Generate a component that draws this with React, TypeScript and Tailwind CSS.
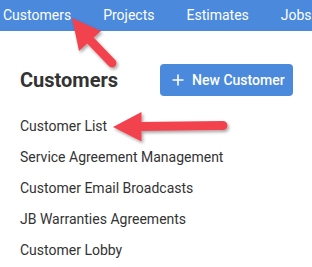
import React from "react";

const items = [
  "Customer List",
  "Service Agreement Management",
  "Customer Email Broadcasts",
  "JB Warranties Agreements",
  "Customer Lobby",
];

export default function App() {
  return (
    <div
      className="relative w-[312px] h-[267px] overflow-hidden bg-white"
      style={{ fontFamily: "Roboto, 'Liberation Sans', sans-serif" }}
    >
      <nav className="h-[31px] bg-[#4a89dc] flex items-center gap-8 pl-[3px] text-[14px] text-white whitespace-nowrap">
        <span>Customers</span>
        <span>Projects</span>
        <span>Estimates</span>
        <span>Jobs</span>
      </nav>
      <div className="pl-[20px]">
        <div className="mt-[33px] flex items-center">
          <h1 className="text-[20px] leading-[24px] font-bold text-[#333]">Customers</h1>
          <button className="ml-[42px] w-[133px] h-[32px] rounded-[4px] bg-[#4a89dc] text-white flex items-center pl-[12px] text-[14px] font-medium whitespace-nowrap">
            <svg width="12" height="12" viewBox="0 0 12 12" className="mr-[8px]">
              <path d="M6 0.5V11.5M0.5 6H11.5" stroke="white" strokeWidth="1.6" />
            </svg>
            New Customer
          </button>
        </div>
        <ul className="mt-[15px] text-[14px] leading-[31px] text-[#333]">
          {items.map((t) => (
            <li key={t}>{t}</li>
          ))}
        </ul>
      </div>
      <svg
        className="absolute left-0 top-0 pointer-events-none"
        width="312"
        height="267"
        viewBox="0 0 312 267"
      >
        <defs>
          <filter id="sh" x="-20%" y="-20%" width="140%" height="140%">
            <feDropShadow dx="1.5" dy="2" stdDeviation="1.5" floodColor="#000" floodOpacity="0.35" />
          </filter>
        </defs>
        <g filter="url(#sh)" fill="#f2424d" stroke="#f2424d">
          <line x1="88" y1="38" x2="112" y2="63" strokeWidth="9" strokeLinecap="round" />
          <polygon points="72,18 101,31 79,51" strokeWidth="0" />
          <line x1="138" y1="126.5" x2="223" y2="125.5" strokeWidth="9" strokeLinecap="round" />
          <polygon points="113,127 141.5,112 141.5,141.5" strokeWidth="0" />
        </g>
      </svg>
    </div>
  );
}
